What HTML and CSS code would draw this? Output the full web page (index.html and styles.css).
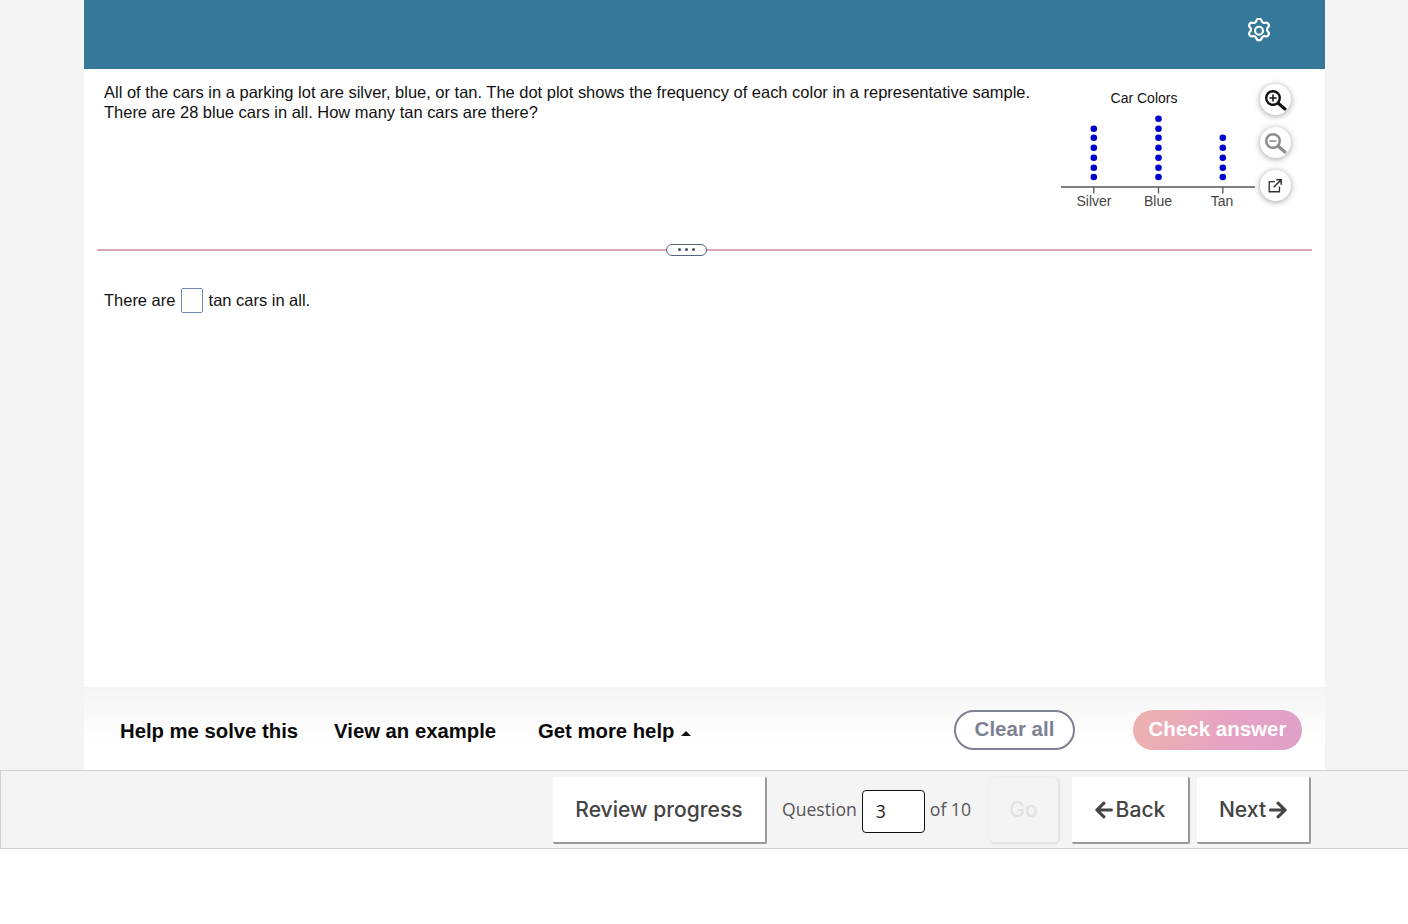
FILE: index.html
```html
<!DOCTYPE html>
<html lang="en">
<head>
<meta charset="utf-8">
<title>Question 3</title>
<link rel="stylesheet" href="styles.css">
</head>
<body>
<div class="shell">
  <header class="topbar">
    <svg class="gear" width="22" height="25" viewBox="2 .5 20 22" fill="none" stroke="#fff" stroke-width="2" stroke-linecap="round" stroke-linejoin="round"><path d="M9.600 2.600a2.500 2.500 0 0 1 4.800 0 2.500 2.500 0 0 0 3.400 1.900 2.500 2.500 0 0 1 2.400 4.200 2.500 2.500 0 0 0 0 3.900 2.500 2.500 0 0 1-2.400 4.200 2.500 2.500 0 0 0-3.400 1.900 2.500 2.500 0 0 1-4.800 0 2.500 2.500 0 0 0-3.400-1.900 2.500 2.500 0 0 1-2.400-4.200 2.500 2.500 0 0 0 0-3.900 2.500 2.500 0 0 1 2.400-4.200 2.500 2.500 0 0 0 3.400-1.900z"/><circle cx="12" cy="11.700" r="3.600"/></svg>
  </header>
  <main class="content">
    <section class="problem">
      <p class="prompt">All of the cars in a parking lot are silver, blue, or tan. The dot plot shows the frequency of each color in a representative sample.<br>There are 28 blue cars in all. How many tan cars are there?</p>
      <div class="figure">
        <svg class="plot" width="200" height="130" viewBox="0 0 200 130">
          <text x="88" y="20" class="plot-title" text-anchor="middle">Car Colors</text>
          <g fill="#0000cd">
            <circle cx="37.800" cy="45.700" r="3.300"/><circle cx="37.800" cy="54.700" r="3.300"/><circle cx="37.800" cy="64.700" r="3.300"/><circle cx="37.800" cy="74.700" r="3.300"/><circle cx="37.800" cy="84.700" r="3.300"/><circle cx="37.800" cy="94" r="3.300"/>
            <circle cx="102.500" cy="35.700" r="3.300"/><circle cx="102.500" cy="45.700" r="3.300"/><circle cx="102.500" cy="54.700" r="3.300"/><circle cx="102.500" cy="64.700" r="3.300"/><circle cx="102.500" cy="74.700" r="3.300"/><circle cx="102.500" cy="84.700" r="3.300"/><circle cx="102.500" cy="94" r="3.300"/>
            <circle cx="166.800" cy="54.700" r="3.300"/><circle cx="166.800" cy="64.700" r="3.300"/><circle cx="166.800" cy="74.700" r="3.300"/><circle cx="166.800" cy="84.700" r="3.300"/><circle cx="166.800" cy="94" r="3.300"/>
          </g>
          <path d="M5 104H199M37.800 104V110.500M102.500 104V110.500M166.800 104V110.500" stroke="#555" stroke-width="1.300" fill="none"/>
          <text x="38" y="123" class="plot-label" text-anchor="middle">Silver</text>
          <text x="102" y="123" class="plot-label" text-anchor="middle">Blue</text>
          <text x="166" y="123" class="plot-label" text-anchor="middle">Tan</text>
        </svg>
        <div class="tools">
          <button class="tool" aria-label="Zoom in"><svg width="24" height="24" viewBox="0 0 24 24" fill="none" stroke="#111" stroke-linecap="round"><circle cx="10" cy="10" r="6.800" stroke-width="2.400"/><path d="M7 10h6M10 7v6" stroke-width="1.500"/><path d="M15.500 15.500L22 21" stroke-width="3"/></svg></button>
          <button class="tool" aria-label="Zoom out"><svg width="24" height="24" viewBox="0 0 24 24" fill="none" stroke="#8a8a8a" stroke-linecap="round"><circle cx="10" cy="10" r="6.800" stroke-width="2.400"/><path d="M7 10h6" stroke-width="1.500"/><path d="M15.500 15.500L22 21" stroke-width="3"/></svg></button>
          <button class="tool" aria-label="Open in new window"><svg width="16" height="16" viewBox="0 0 18 18" fill="none" stroke="#333" stroke-width="1.500"><path d="M9 4H2.500V15.500H14V9.500"/><path d="M7.500 10.500L15.500 2.500M10.500 2H16V7.500" stroke-width="1.700"/></svg></button>
        </div>
      </div>
    </section>
    <div class="divider"><span class="handle"><i></i><i></i><i></i></span></div>
    <p class="answer">There are <span class="blank"></span> tan cars in all.</p>
  </main>
  <section class="helpbar">
    <nav class="helplinks">
      <a class="helplink">Help me solve this</a>
      <a class="helplink">View an example</a>
      <a class="helplink">Get more help <span class="caret"></span></a>
    </nav>
    <div class="actions">
      <button class="clear">Clear all</button>
      <button class="check">Check answer</button>
    </div>
  </section>
</div>
<footer class="navbar">
  <button class="navbtn review">Review progress</button>
  <div class="jump">
    <span>Question</span>
    <span class="qbox">3</span>
    <span>of 10</span>
  </div>
  <button class="navbtn go">Go</button>
  <button class="navbtn back"><svg class="arrow" width="18" height="20" viewBox="0 0 448 512"><path d="M257.500 445.100l-22.200 22.200c-9.400 9.400-24.600 9.400-33.900 0L7 273c-9.400-9.400-9.400-24.600 0-33.900L201.400 44.700c9.400-9.400 24.600-9.400 33.900 0l22.200 22.200c9.500 9.500 9.300 25-.4 34.300L136.600 216H424c13.300 0 24 10.700 24 24v32c0 13.300-10.700 24-24 24H136.600l120.500 114.800c9.800 9.300 10 24.800.4 34.300z"/></svg>Back</button>
  <button class="navbtn next">Next<svg class="arrow" width="18" height="20" viewBox="0 0 448 512"><path d="M190.500 66.900l22.200-22.200c9.400-9.400 24.600-9.400 33.900 0L441 239c9.400 9.400 9.400 24.600 0 33.900L246.600 467.300c-9.400 9.400-24.600 9.400-33.900 0l-22.200-22.200c-9.500-9.500-9.300-25 .4-34.300L311.400 296H24c-13.300 0-24-10.700-24-24v-32c0-13.300 10.700-24 24-24h287.400L190.900 101.200c-9.800-9.300-10-24.800-.4-34.300z"/></svg></button>
</footer>
</body>
</html>
```
FILE: styles.css
```css
* { box-sizing: border-box; }
html, body { margin: 0; padding: 0; }
body {
  height: 924px;
  background: #fff;
  font-family: "Liberation Sans", Arial, sans-serif;
  color: #111;
  overflow: hidden;
}
.shell {
  height: 770px;
  padding: 0 83px 0 84px;
  background: #f4f4f4;
  display: flex;
  flex-direction: column;
}
.topbar {
  height: 69px;
  flex: none;
  background: #357899;
  display: flex;
  align-items: center;
  justify-content: flex-end;
  padding: 0 55px 8px 0;
}
.content {
  flex: 1;
  background: #fff;
  display: flex;
  flex-direction: column;
}
.problem {
  height: 180px;
  display: flex;
  justify-content: space-between;
  padding-left: 20px;
}
.prompt {
  margin: 13px 0 0;
  font-size: 16.480px;
  line-height: 20px;
}
.figure {
  display: flex;
  padding: 14px 34.500px 0 0;
  align-items: flex-start;
}
.plot { display: block; overflow: visible; margin-right: 4px; }
.plot-title { font-size: 14px; fill: #111; }
.plot-label { font-size: 14px; fill: #444; }
.tools {
  display: flex;
  flex-direction: column;
  gap: 12px;
  padding-top: 1px;
}
.tool {
  width: 31px;
  height: 31px;
  padding: 0;
  border: 0;
  border-radius: 50%;
  background: #fff;
  box-shadow: 0 1px 6px rgba(0, 0, 0, .38);
  display: flex;
  align-items: center;
  justify-content: center;
}
.divider {
  margin: 0 13px;
  height: 1.500px;
  background: #d9a5b5;
  display: flex;
  justify-content: center;
  align-items: center;
}
.handle {
  width: 41px;
  height: 12px;
  flex: none;
  background: #fff;
  border: 1.500px solid #5b6580;
  border-radius: 6px;
  display: flex;
  align-items: center;
  justify-content: center;
  gap: 4px;
  margin-left: -36px;
}
.handle i {
  width: 3px;
  height: 3px;
  border-radius: 50%;
  background: #444c66;
}
.answer {
  margin: 37px 0 0 20px;
  font-size: 16.480px;
  line-height: 25px;
  display: flex;
  align-items: center;
  white-space: pre;
}
.blank {
  width: 22px;
  height: 25px;
  margin: 0 .5px 0 1.500px;
  border: 1.500px solid #6d8db3;
  border-radius: 2px;
  background: #fff;
}
.helpbar {
  height: 83px;
  flex: none;
  background: linear-gradient(#f4f4f4, #fff 65%);
  display: flex;
  justify-content: space-between;
  align-items: center;
  padding: 3px 23px 0 36px;
}
.helplinks {
  display: flex;
  gap: 36px;
  padding-top: 3px;
}
.helplink {
  font-size: 20.300px;
  font-weight: 700;
  color: #0b0b0b;
  display: flex;
  align-items: center;
}
.helplink:last-child { margin-left: 6px; white-space: pre; }
.caret {
  width: 0;
  height: 0;
  margin: 3px 0 0 .5px;
  border: 5px solid transparent;
  border-top: 0;
  border-bottom: 5px solid #111;
}
.actions {
  display: flex;
  gap: 58px;
  align-items: center;
}
.clear, .check {
  height: 40px;
  border-radius: 20px;
  font: 700 20.500px "Liberation Sans", Arial, sans-serif;
  padding: 0 0 2px;
}
.clear {
  width: 121px;
  background: #fff;
  border: 2.500px solid #7d8191;
  color: #7d8191;
}
.check {
  width: 169px;
  border: 0;
  color: #fff;
  background: linear-gradient(100deg, #edb2ae, #e6a2c4 60%, #dfa0c8);
}
.navbar {
  height: 79px;
  background: #f4f4f4;
  border: 2px solid #cfcfcf;
  border-width: 1.500px 0 1.500px 1.500px;
  display: flex;
  align-items: center;
  justify-content: flex-end;
  padding: 2px 97px 0 0;
}
.navbtn {
  height: 67px;
  padding: 0;
  background: #fff;
  border: 0;
  border-right: 2px solid #999;
  border-bottom: 2px solid #999;
  border-radius: 2px;
  font: 500 21.100px Inter, sans-serif;
  color: #444;
  display: flex;
  align-items: center;
  justify-content: center;
  gap: 3px;
}
.arrow { fill: #444; flex: none; }
.review { width: 214px; }
.jump {
  display: flex;
  align-items: center;
  font: 17.600px "Open Sans", sans-serif;
  color: #555;
  gap: 5px;
  margin: 0 18px 3px 15px;
}
.qbox {
  width: 63px;
  height: 43px;
  margin-top: 5px;
  background: #fff;
  border: 1.500px solid #111;
  border-radius: 4px;
  color: #222;
  padding: 7px 0 0 13px;
  line-height: 26px;
}
.go {
  width: 71px;
  background: #f4f4f4;
  color: #e2e2e2;
  border-right-color: #e4e4e4;
  border-bottom-color: #e4e4e4;
  border-radius: 6px;
  box-shadow: 0 0 2px #e4e4e4;
  margin-right: 12px;
}
.back { width: 118px; margin-right: 7px; }
.next { width: 114px; }
```
